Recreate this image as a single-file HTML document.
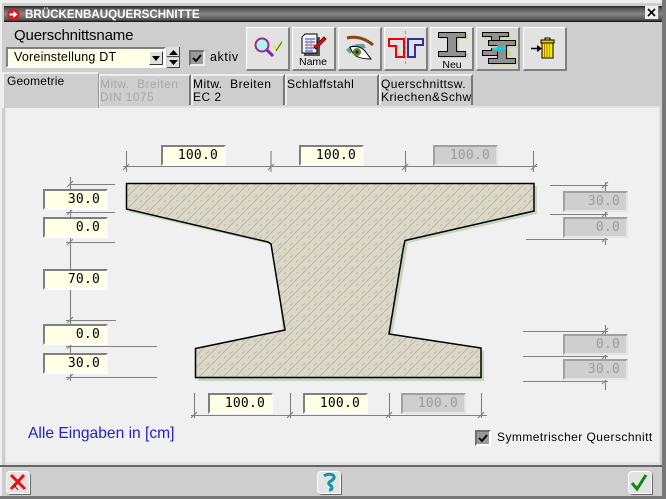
<!DOCTYPE html>
<html><head><meta charset="utf-8"><style>
html,body{margin:0;padding:0}
body{width:666px;height:499px;position:relative;overflow:hidden;background:#cecece;font-family:"Liberation Sans",sans-serif;color:#000}
.a{position:absolute;white-space:pre}
.i{position:absolute;box-sizing:border-box;width:65px;height:21px;border:2px solid #808080;border-right:2px solid #fafafa;border-bottom:2px solid #fff;background:#ffffe6;font:13px/17px "DejaVu Sans Mono",monospace;letter-spacing:.2px;text-align:right;padding-right:6px}
.d{background:#cfcfcf;color:#9c9c9c;border-color:#a0a0a0;border-right-color:#e4e4e4;border-bottom-color:#e4e4e4}
.t{position:absolute;top:74px;height:31px;box-sizing:border-box;border-top:2px solid #eee;border-left:2px solid #eee;border-right:2px solid #777;background:#cecece;font-size:12px;line-height:13px;letter-spacing:.45px;padding:2px 0 0 0;white-space:pre}
.b{position:absolute;top:27px;width:44px;height:44px;box-sizing:border-box;background:#e2e2e2;border-top:1px solid #fff;border-left:1px solid #fff;border-right:2px solid #808080;border-bottom:2px solid #808080}
.s{position:absolute;top:471px;width:24px;height:23px;box-sizing:border-box;background:#e4e4e4;border:1px solid #fff;border-radius:4px 4px 0 4px;box-shadow:1px 1px 0 #666}
</style></head><body>
<div class="a" style="left:0;top:0;width:666px;height:3px;background:#eee"></div>
<div class="a" style="left:0;top:0;width:2px;height:499px;background:#eee"></div>
<div class="a" style="left:662px;top:0;width:4px;height:499px;background:#777"></div>
<div class="a" style="left:0;top:496px;width:666px;height:3px;background:#777"></div>
<div class="a" style="left:4px;top:6px;width:658px;height:16px;background:linear-gradient(#222 0,#555 15%,#868686 50%,#555 85%,#111 100%)"></div>
<svg class="a" style="left:7px;top:8px" width="13" height="13"><circle cx="6.500" cy="6.500" r="6" fill="#e01818"/><path d="M2.500 5.500h4v-2.500l4 3.500-4 3.500v-2.500h-4z" fill="#fff"/></svg>
<div class="a" style="left:25px;top:7px;font:bold 11.600px/15px 'Liberation Sans',sans-serif;color:#fff">BRÜCKENBAUQUERSCHNITTE</div>
<div class="a" style="left:645px;top:6px;width:14px;height:13px;background:#eee;border-right:1px solid #777;box-sizing:border-box"></div>
<svg class="a" style="left:645px;top:6px" width="14" height="13"><path d="M3 3l7 7M10 3l-7 7" stroke="#000" stroke-width="1.600"/></svg>

<div class="a" style="left:14px;top:27px;font-size:15px;line-height:18px;letter-spacing:-.15px">Querschnittsname</div>
<div class="a" style="left:6px;top:47px;width:160px;height:21px;box-sizing:border-box;background:#ffffe6;border:2px solid #808080;border-right-color:#fff;border-bottom-color:#fff"></div>
<div class="a" style="left:14px;top:50px;font-size:12.500px;line-height:15px;letter-spacing:.22px">Voreinstellung DT</div>
<div class="a" style="left:149px;top:51px;width:14px;height:14px;box-sizing:border-box;background:#e0e0e0;border:1px solid #fff;border-right-color:#333;border-bottom-color:#333"></div>
<svg class="a" style="left:149px;top:51px" width="14" height="14"><path d="M3 5h8l-4 5z" fill="#000"/></svg>
<svg class="a" style="left:167px;top:47px" width="14" height="22"><rect x="0" y="0" width="13" height="10" fill="#e0e0e0"/><rect x="0" y="11" width="13" height="10" fill="#e0e0e0"/><path d="M0 9.500h13M0 20.500h13M12.500 0v21" stroke="#444" fill="none"/><path d="M2 8l4.500-5 4.500 5zM2 13h9l-4.500 5z" fill="#000"/></svg>
<div class="a" style="left:189px;top:50px;width:16px;height:16px;box-sizing:border-box;background:#9a9a9a;border:2px solid #707070;border-right-color:#eee;border-bottom-color:#eee"></div>
<svg class="a" style="left:189px;top:50px" width="16" height="16"><path d="M4 8l3 3 5-6" stroke="#000" stroke-width="1.800" fill="none"/></svg>
<div class="a" style="left:210px;top:50px;font-size:12.500px;line-height:15px;letter-spacing:.6px">aktiv</div>

<div class="b" style="left:246px"></div><div class="b" style="left:292px"></div><div class="b" style="left:338px"></div><div class="b" style="left:384px"></div><div class="b" style="left:430px"></div><div class="b" style="left:476px;background:#d8d8d8"></div><div class="b" style="left:523px"></div>

<svg class="a" style="left:0;top:0" width="666" height="80">
<path d="M267 50l6 6" stroke="#8020c0" stroke-width="3"/><circle cx="262" cy="45" r="6.500" fill="#b0f4f4" stroke="#a02890" stroke-width="2"/>
<path d="M274 46l2.500 4 5.500-9" stroke="#e8e020" stroke-width="2" fill="none"/><path d="M276 51l6-9" stroke="#208020" fill="none"/>
<rect x="304" y="37" width="16" height="19" fill="#555"/><path d="M302 37l3-3h12v19h-15z" fill="#f4f4f4" stroke="#000"/>
<path d="M305 39h10M305 42h10M305 48h10M305 51h8" stroke="#3040b0"/><path d="M305 45h10" stroke="#c03040"/><path d="M307 38v14M311 38v14" stroke="#9090d0"/>
<path d="M314 47l10-10 2 2-10 10z" fill="#e01818" stroke="#700"/>
<path d="M347 38q14-3 26 7" stroke="#8a4418" stroke-width="3" fill="none"/>
<path d="M346 50q6-7 18-6l2 4-12 1-4 5z" fill="#6aa0a4"/>
<path d="M350 47q10-2 15 4l6 8q-10 0-15-3-4-3-6-9z" fill="#fff" stroke="#000"/>
<circle cx="357" cy="52" r="4" fill="#5a8a20"/><circle cx="357" cy="52" r="1.500" fill="#123"/>
<path d="M389 39h15v18h-8v-11h-7z" fill="none" stroke="#f00000" stroke-width="2"/>
<path d="M408 39h15v6h-8v12h-7z" fill="none" stroke="#3030a0" stroke-width="2"/>
<path d="M405.500 31v34" stroke="#999" stroke-dasharray="3 2"/>
<path d="M440 34h28v5h-9v14h9v5h-28v-5h9v-14h-9z" fill="#d2d2a2"/>
<path d="M438.500 32.500h27v5h-9v14h9v5h-27v-5h9v-14h-9z" fill="#909090" stroke="#000"/>
<path d="M484 34h27v5h-9v12h9v5h-27v-5h9v-12h-9z" fill="#d2d2a2"/>
<path d="M482.500 32.500h26v4h-9v14h9v5h-26v-5h9v-14h-9z" fill="#909090" stroke="#000"/>
<path d="M490 43h28v5h-9v11h9v6h-28v-6h9v-11h-9z" fill="#d2d2a2"/>
<path d="M488.500 40.500h27v5h-9v13h9v5h-27v-5h9v-13h-9z" fill="#909090" stroke="#000"/>
<path d="M493 48.500h12" stroke="#00e8f0" stroke-width="2"/><path d="M504 45l-5 3.500 5 3.500zM497 45l4 3.500-4 3.500z" fill="#00d0e0"/>
<path d="M531 48.500h9" stroke="#000" stroke-width="1.500"/><path d="M537 45l5 3.500-5 3.500z" fill="#000"/>
<rect x="541" y="40" width="13" height="3" fill="#e8d000" stroke="#000"/>
<rect x="542" y="43" width="11" height="15" fill="#f8e800" stroke="#000"/>
<path d="M544.500 44v13M547 44v13M549.500 44v13" stroke="#b08000"/><path d="M545 40v-2h5v2" fill="none" stroke="#000"/>
<text x="313" y="65" font-size="10.500" text-anchor="middle" font-family="Liberation Sans,sans-serif">Name</text>
<text x="452" y="68" font-size="10.500" text-anchor="middle" font-family="Liberation Sans,sans-serif">Neu</text>
</svg>

<div class="a" style="left:5px;top:106px;width:655px;height:359px;background:#e2e2e2"></div>
<div class="a" style="left:6px;top:108px;width:653px;height:354px;background:#f0f0f0"></div>
<div class="a" style="left:0;top:465px;width:662px;height:2px;background:#666"></div>

<div class="t" style="left:98px;width:93px;color:#a8a8a8">Mitw.  Breiten
DIN 1075</div>
<div class="t" style="left:191px;width:94px">Mitw.  Breiten
EC 2</div>
<div class="t" style="left:285px;width:94px">Schlaffstahl</div>
<div class="t" style="left:379px;width:94px">Querschnittsw.
Kriechen&amp;Schw</div>
<div class="t" style="left:2px;top:72px;width:97px;height:36px;padding-left:3px;padding-top:1px;border-right:1px solid #999;letter-spacing:.15px">Geometrie</div>

<svg class="a" style="left:0;top:0" width="666" height="499">
<defs><pattern id="h" width="12" height="12" patternUnits="userSpaceOnUse">
<rect width="12" height="12" fill="#dcd8c8"/>
<path d="M0 12l12-12" stroke="#b0b0a8" stroke-width=".8"/>
<path d="M2 6l3-3M8 10l2-2" stroke="#b0b0a8" stroke-width=".8"/>
</pattern></defs>
<path id="sh" d="M129 186H537V214L408 243 392 337 484 351V381H198V351L283 333 274 245 129 212Z" fill="#c6d6be"/>
<path d="M126.500 183.500H534V211L405 240.500 403 250 389 334 481 348V377.500H195.500V348.500L285 330 271 244 268 242 126.500 209Z" fill="url(#h)" stroke="#000" stroke-width="1.500"/>
<g stroke="#808080" fill="none" stroke-width="1.100">
<path d="M126.500 151v21M271 151v21M405.500 151v21M533.500 151v21M123 166.500H537"/>
<path d="M70.500 177V381M70 184.500h45M66 212.500h49M66 242.500h49M66 320.500h50M66 346.500h91M66 377.500h91"/>
<path d="M605.500 182V245M605.500 325V390M550 185.500h58M550 214.500h58M526 239.500h82M523 331.500h85M523 356.500h85M523 381.500h85"/>
<path d="M194.500 393v25M290.500 393v25M389.500 393v25M481.500 393v25M191 415.500H487"/>
<path d="M123 170l6-6M268 170l6-6M402 170l6-6M531 170l6-6M67 187l6-6M67 215l6-6M67 245l6-6M67 323l6-6M67 349l6-6M67 380l6-6M602 188l6-6M602 217l6-6M602 242l6-6M602 334l6-6M602 359l6-6M602 384l6-6M191 418l6-6M287 418l6-6M386 418l6-6M478 418l6-6"/>
</g>
</svg>

<div class="i" style="left:161px;top:145px">100.0</div>
<div class="i" style="left:299px;top:145px">100.0</div>
<div class="i d" style="left:433px;top:145px">100.0</div>
<div class="i" style="left:43px;top:189px">30.0</div>
<div class="i" style="left:43px;top:217px">0.0</div>
<div class="i" style="left:43px;top:269px">70.0</div>
<div class="i" style="left:43px;top:324px">0.0</div>
<div class="i" style="left:43px;top:353px">30.0</div>
<div class="i d" style="left:563px;top:191px">30.0</div>
<div class="i d" style="left:563px;top:217px">0.0</div>
<div class="i d" style="left:563px;top:334px">0.0</div>
<div class="i d" style="left:563px;top:359px">30.0</div>
<div class="i" style="left:208px;top:393px">100.0</div>
<div class="i" style="left:303px;top:393px">100.0</div>
<div class="i d" style="left:401px;top:393px">100.0</div>

<div class="a" style="left:28px;top:425px;font-size:15.600px;line-height:17px;color:#2222c0">Alle Eingaben in [cm]</div>
<div class="a" style="left:475px;top:430px;width:16px;height:16px;box-sizing:border-box;background:#9a9a9a;border:2px solid #707070;border-right-color:#fff;border-bottom-color:#fff"></div>
<svg class="a" style="left:475px;top:430px" width="16" height="16"><path d="M4 8l3 3 5-6" stroke="#000" stroke-width="1.800" fill="none"/></svg>
<div class="a" style="left:497px;top:430px;font-size:12px;line-height:15px;letter-spacing:.44px">Symmetrischer Querschnitt</div>

<div class="s" style="left:6px"></div><div class="s" style="left:317px"></div><div class="s" style="left:628px"></div>
<svg class="a" style="left:0;top:465px" width="666" height="34">
<path d="M11 10l14 14M24 10l-13 14" stroke="#e81010" stroke-width="3"/><path d="M14 20l4 5" stroke="#800" />
<path d="M324 11q4-3 9-1 3 3-2 6-4 2-1 4 2 1 2 3t-3 2" fill="none" stroke="#1890b0" stroke-width="3"/>
<path d="M632 18l5 6 9-14" fill="none" stroke="#108810" stroke-width="3"/>
</svg>
</body></html>
